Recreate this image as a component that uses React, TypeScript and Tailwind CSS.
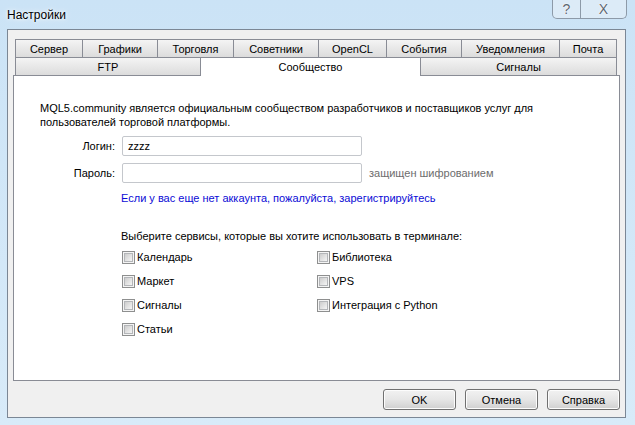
const row1 = [
  { label: "Сервер", w: "w-[67px]" },
  { label: "Графики", w: "w-[75px]" },
  { label: "Торговля", w: "w-[76px]" },
  { label: "Советники", w: "w-[85px]" },
  { label: "OpenCL", w: "w-[68px]" },
  { label: "События", w: "w-[75px]" },
  { label: "Уведомления", w: "w-[98px]" },
  { label: "Почта", w: "w-[58px]" },
];

const leftServices = ["Календарь", "Маркет", "Сигналы", "Статьи"];
const rightServices = ["Библиотека", "VPS", "Интеграция с Python"];

function Tab({ label, w, last }: { label: string; w: string; last?: boolean }) {
  return (
    <div
      className={`${w} h-[18px] flex items-center justify-center border-t border-l border-[#898c95] bg-linear-to-b from-[#f4f4f4] to-[#dcdcdc] ${
        last ? "border-r" : ""
      }`}
    >
      {label}
    </div>
  );
}

function Checkbox({ label }: { label: string }) {
  return (
    <div className="h-[24px] flex items-center gap-[2px]">
      <span className="w-[13px] h-[13px] border border-[#8e8f8f] bg-[#f4f4f4] p-[1px] flex">
        <span className="flex-1 border border-[#b4b6b9] bg-linear-to-br from-[#cdcdcd] to-[#f5f5f5]" />
      </span>
      <span>{label}</span>
    </div>
  );
}

function DlgButton({ children }: { children: React.ReactNode }) {
  return (
    <div className="w-[73px] h-[21px] flex items-center justify-center rounded-[3px] border border-[#707070] bg-linear-to-b from-[#f2f2f2] via-[#e6e6e6] to-[#d0d0d0] shadow-[inset_0_0_0_1px_#fcfcfc]">
      {children}
    </div>
  );
}

export default function App() {
  return (
    <div className="w-[635px] h-[425px] overflow-hidden flex flex-col bg-linear-to-b from-[#cbe3f6] to-[#d8ebf9] text-[11px] leading-[14px] text-black font-['Liberation_Sans',Arial,sans-serif]">
      {/* title bar */}
      <div className="h-[29px] flex items-start shrink-0">
        <div className="pl-[7px] pt-[8px] text-[12px] leading-[15px] [text-shadow:0_0_6px_#ffffff,0_0_3px_#ffffff]">
          Настройки
        </div>
        <div className="ml-auto mr-[8px] flex h-[19px] rounded-b-[5px] border border-t-0 border-[#8d9aa8] bg-[#e3eef8]/70 overflow-hidden">
          <div className="w-[28px] flex items-center justify-center border-r border-[#8d9aa8] text-[14px] text-[#5d6772] [text-shadow:0_0_1px_#ffffff,0_0_2px_#ffffff]">
            ?
          </div>
          <div className="w-[45px] flex items-center justify-center text-[14px] text-[#5d6772] [text-shadow:0_0_1px_#ffffff,0_0_2px_#ffffff]">
            X
          </div>
        </div>
      </div>

      {/* client area */}
      <div className="ml-[7px] w-[619px] h-[389px] shrink-0 bg-[#f0f0f0] border border-[#7b8795] flex flex-col pl-[5px] pt-[9px]">
        {/* tab strip */}
        <div className="ml-[2px] flex">
          {row1.map((t, i) => (
            <Tab key={t.label} label={t.label} w={t.w} last={i === row1.length - 1} />
          ))}
        </div>
        <div className="ml-[2px] flex">
          <div className="w-[185px] h-[18px] flex items-center justify-center border-t border-l border-[#898c95] bg-linear-to-b from-[#f4f4f4] to-[#dcdcdc]">
            FTP
          </div>
          <div className="relative z-10 w-[221px] h-[19px] -mb-px flex justify-center pt-[2px] border-t border-l border-r border-[#898c95] bg-white">
            Сообщество
          </div>
          <div className="w-[196px] h-[18px] flex items-center justify-center border-t border-r border-[#898c95] bg-linear-to-b from-[#f4f4f4] to-[#dcdcdc]">
            Сигналы
          </div>
        </div>

        {/* page */}
        <div className="w-[607px] h-[306px] border border-[#898c95] bg-white pl-[26px] pt-[25px] flex flex-col">
          <p className="w-[500px]">
            MQL5.community является официальным сообществом разработчиков и поставщиков услуг для
            пользователей торговой платформы.
          </p>

          <div className="mt-[7px] flex items-center gap-[7px]">
            <span className="w-[75px] text-right">Логин:</span>
            <div className="w-[240px] h-[20px] border border-[#c4c7cc] rounded-[2px] flex items-center pl-[5px]">
              zzzz
            </div>
          </div>
          <div className="mt-[7px] flex items-center gap-[7px]">
            <span className="w-[75px] text-right">Пароль:</span>
            <div className="w-[240px] h-[20px] border border-[#c4c7cc] rounded-[2px]" />
            <span className="text-[#6d6d6d]">защищен шифрованием</span>
          </div>

          <div className="mt-[8px] ml-[81px] text-[#0b0bd6]">
            Если у вас еще нет аккаунта, пожалуйста, зарегистрируйтесь
          </div>

          <div className="mt-[24px] ml-[81px]">
            Выберите сервисы, которые вы хотите использовать в терминале:
          </div>

          <div className="mt-[2px] ml-[82px] flex">
            <div className="w-[195px] flex flex-col">
              {leftServices.map((s) => (
                <Checkbox key={s} label={s} />
              ))}
            </div>
            <div className="flex flex-col">
              {rightServices.map((s) => (
                <Checkbox key={s} label={s} />
              ))}
            </div>
          </div>
        </div>

        {/* buttons */}
        <div className="w-[607px] mt-[8px] flex justify-end gap-[9px]">
          <DlgButton>OK</DlgButton>
          <DlgButton>Отмена</DlgButton>
          <DlgButton>Справка</DlgButton>
        </div>
      </div>
    </div>
  );
}
